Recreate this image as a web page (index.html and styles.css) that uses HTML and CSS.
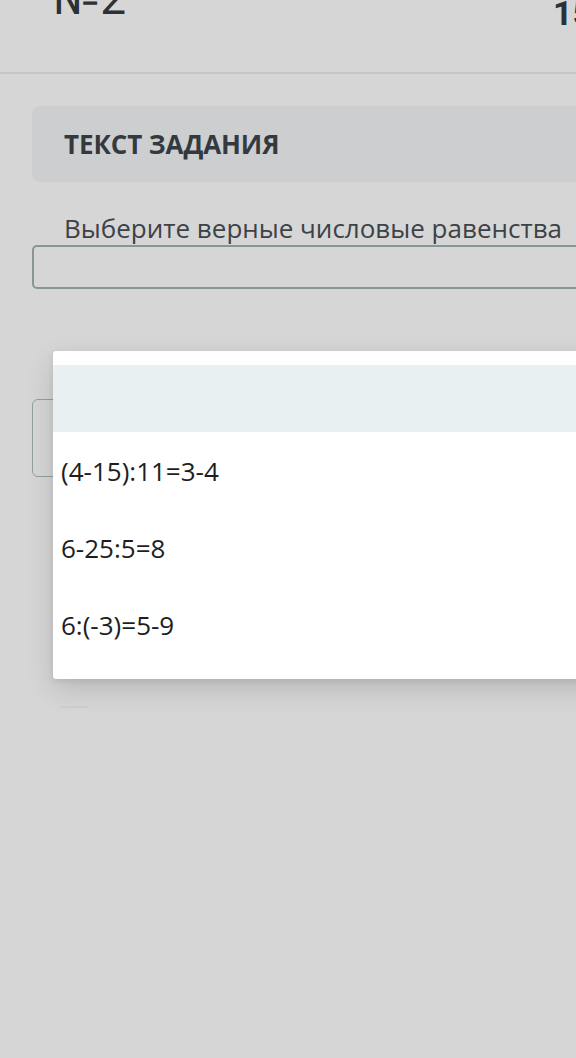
FILE: index.html
```html
<!DOCTYPE html>
<html lang="ru">
<head>
<meta charset="utf-8">
<link rel="stylesheet" href="styles.css">
</head>
<body>
<div class="page">
  <header class="header">
    <div class="num">№2</div>
    <div class="count">15</div>
  </header>
  <main class="main">
    <div class="task-card">ТЕКСТ ЗАДАНИЯ</div>
    <p class="question">Выберите верные числовые равенства</p>
    <div class="field"></div>
    <div class="field field-second"></div>
    <div class="faint"></div>
  </main>
  <div class="dropdown">
    <div class="opt opt-empty"></div>
    <div class="opt">(4-15):11=3-4</div>
    <div class="opt">6-25:5=8</div>
    <div class="opt">6:(-3)=5-9</div>
  </div>
</div>
</body>
</html>
```
FILE: styles.css
```css
html, body {
  margin: 0;
  padding: 0;
  background: #d6d6d6;
  overflow: hidden;
}
.page {
  position: relative;
  width: 576px;
  height: 1058px;
  overflow: hidden;
  background: #d6d6d6;
  font-family: "Open Sans", "Noto Sans", sans-serif;
}
.header {
  height: 72px;
  border-bottom: 2px solid #c5c6c6;
  display: flex;
  justify-content: space-between;
  align-items: flex-start;
  padding-left: 53px;
  width: 568px;
}
.num {
  font-family: "Roboto", "Liberation Sans", sans-serif;
  font-size: 46px;
  line-height: 46px;
  margin-top: -25px;
  color: #2b3136;
}
.count {
  font-family: "Roboto", "Liberation Sans", sans-serif;
  font-weight: 700;
  font-size: 34px;
  line-height: 34px;
  margin-top: -4px;
  width: 68px;
  color: #2b3136;
}
.main {
  padding: 32px 0 0 32px;
  width: 640px;
}
.task-card {
  height: 76px;
  background: #cdcecf;
  border-radius: 8px;
  display: flex;
  align-items: center;
  padding-left: 32px;
  font-weight: 700;
  font-size: 26px;
  letter-spacing: -0.1px;
  color: #32393f;
}
.question {
  margin: 29px 0 0 32px;
  font-size: 26px;
  line-height: 34px;
  color: #3d4246;
}
.field {
  height: 40px;
  border: 2px solid #879797;
  border-radius: 5px;
}
.field-second {
  height: 76px;
  border: 1px solid #8fa0a0;
  border-radius: 6px;
  margin-top: 110px;
}
.faint {
  width: 28px;
  height: 2px;
  margin: 229px 0 0 28px;
  background: #cfcfcf;
}
.dropdown {
  position: absolute;
  top: 351px;
  left: 53px;
  width: 600px;
  height: 328px;
  box-sizing: border-box;
  padding-top: 14px;
  background: #fff;
  border-radius: 3px;
  box-shadow: 0 10px 28px rgba(0, 0, 0, 0.14), 0 2px 6px rgba(0, 0, 0, 0.08);
}
.opt {
  height: 77px;
  display: flex;
  align-items: center;
  padding-left: 8px;
  font-size: 26px;
  color: #1e1e1e;
}
.opt-empty {
  height: 67px;
  background: #e9f0f2;
}
```
